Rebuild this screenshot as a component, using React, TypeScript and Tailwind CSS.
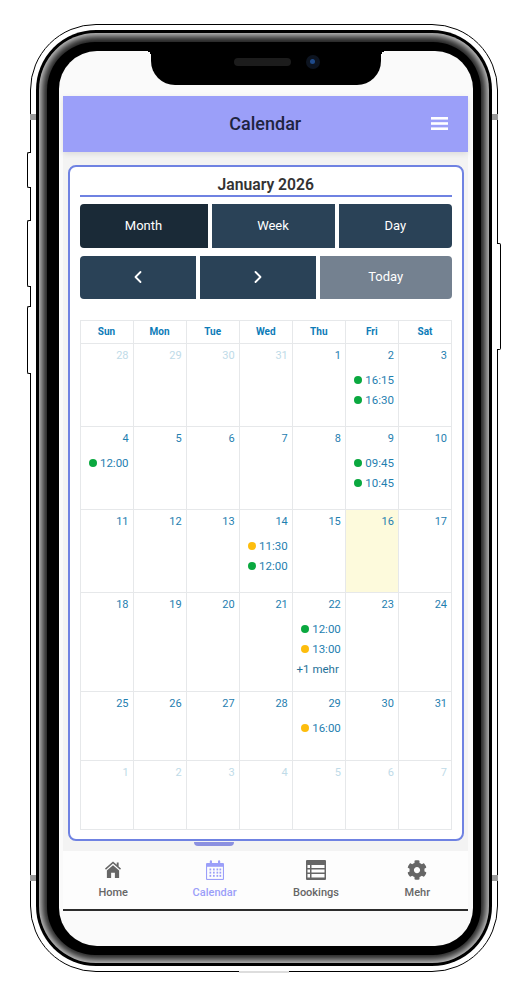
import { ChevronLeft, ChevronRight } from "lucide-react";
import { FaCog } from "react-icons/fa";

type Ev = { time: string; color: "green" | "amber" };
type Day = { n: number; muted?: boolean; today?: boolean; events?: Ev[]; more?: string };

const g = (time: string): Ev => ({ time, color: "green" });
const a = (time: string): Ev => ({ time, color: "amber" });

const weeks: { height: string; days: Day[] }[] = [
  {
    height: "h-[83px]",
    days: [
      { n: 28, muted: true },
      { n: 29, muted: true },
      { n: 30, muted: true },
      { n: 31, muted: true },
      { n: 1 },
      { n: 2, events: [g("16:15"), g("16:30")] },
      { n: 3 },
    ],
  },
  {
    height: "h-[83px]",
    days: [
      { n: 4, events: [g("12:00")] },
      { n: 5 },
      { n: 6 },
      { n: 7 },
      { n: 8 },
      { n: 9, events: [g("09:45"), g("10:45")] },
      { n: 10 },
    ],
  },
  {
    height: "h-[83px]",
    days: [
      { n: 11 },
      { n: 12 },
      { n: 13 },
      { n: 14, events: [a("11:30"), g("12:00")] },
      { n: 15 },
      { n: 16, today: true },
      { n: 17 },
    ],
  },
  {
    height: "h-[99px]",
    days: [
      { n: 18 },
      { n: 19 },
      { n: 20 },
      { n: 21 },
      { n: 22, events: [g("12:00"), a("13:00")], more: "+1 mehr" },
      { n: 23 },
      { n: 24 },
    ],
  },
  {
    height: "h-[69px]",
    days: [
      { n: 25 },
      { n: 26 },
      { n: 27 },
      { n: 28 },
      { n: 29, events: [a("16:00")] },
      { n: 30 },
      { n: 31 },
    ],
  },
  {
    height: "h-[69px]",
    days: [
      { n: 1, muted: true },
      { n: 2, muted: true },
      { n: 3, muted: true },
      { n: 4, muted: true },
      { n: 5, muted: true },
      { n: 6, muted: true },
      { n: 7, muted: true },
    ],
  },
];

function HomeIcon() {
  return (
    <svg width="16" height="17" viewBox="0 0 17 18" fill="#666666">
      <path d="M8.500 0.500 12.500 4V1.500H14.500V5.800L17 8 16 9.200 8.500 2.700 1 9.200 0 8Z" />
      <path d="M8.500 4.500 15 10V18H10.500V12.500H6.500V18H2V10Z" />
    </svg>
  );
}

function CalendarIcon() {
  return (
    <svg width="18" height="20" viewBox="0 0 18 20" fill="#9b9ff9">
      <path d="M1 3h2.800V1.300a1.100 1.100 0 0 1 2.200 0V3h6V1.300a1.100 1.100 0 0 1 2.200 0V3H17a1 1 0 0 1 1 1v15a1 1 0 0 1-1 1H1a1 1 0 0 1-1-1V4a1 1 0 0 1 1-1Z" />
      <rect x="1.100" y="6.800" width="15.800" height="12.100" fill="#fdfdfd" />
      {[3.500, 7, 10.500, 13.500].map((x) =>
        [8.500, 11.700, 14.900].map((y) => <rect key={`${x}-${y}`} x={x} y={y} width="1.700" height="1.900" />),
      )}
    </svg>
  );
}

function BookingsIcon() {
  return (
    <svg width="20" height="20" viewBox="0 0 20 20" fill="#666666">
      <path fillRule="evenodd" d="M1 0h18a1 1 0 0 1 1 1v18a1 1 0 0 1-1 1H1a1 1 0 0 1-1-1V1a1 1 0 0 1 1-1Zm.5 5v3h2.500V5Zm4 0v3h13V5Zm-4 4.500v3h2.500v-3Zm4 0v3h13v-3Zm-4 4.500v3.500h2.500V14Zm4 0v3.500h13V14Z" />
    </svg>
  );
}

function MenuIcon() {
  return (
    <svg width="17" height="13" viewBox="0 0 17 13" fill="#ffffff">
      <rect width="17" height="2.600" y="0" />
      <rect width="17" height="2.600" y="5.200" />
      <rect width="17" height="2.600" y="10.400" />
    </svg>
  );
}

function TabItem({ icon, label, active }: { icon: React.ReactNode; label: string; active?: boolean }) {
  return (
    <div className="flex flex-1 flex-col items-center">
      <div className="flex h-[20px] items-center justify-center">{icon}</div>
      <div className={`mt-[6px] text-[11px] leading-[13px] font-medium ${active ? "text-[#9b9ff9]" : "text-[#666666]"}`}>
        {label}
      </div>
    </div>
  );
}

function Cell({ day }: { day: Day }) {
  return (
    <td className={`border border-[#e6e8ea] p-0 align-top ${day.today ? "bg-[#fdfadc]" : ""}`}>
      <div className={`pt-[5px] pr-[4px] text-right text-[11px] leading-[14px] ${day.muted ? "text-[#c0dbe8]" : "text-[#1f80b0]"}`}>
        {day.n}
      </div>
      {day.events && (
        <div className="mt-[10px] flex flex-col gap-[6px] pr-[4px]">
          {day.events.map((ev) => (
            <div key={ev.time} className="flex h-[14px] items-center justify-end gap-[3px] text-[11.500px] leading-[14px] text-[#1f80b0]">
              <span className={`h-[8px] w-[8px] rounded-full ${ev.color === "green" ? "bg-[#0aa83f]" : "bg-[#fdbd0d]"}`} />
              <span>{ev.time}</span>
            </div>
          ))}
        </div>
      )}
      {day.more && <div className="mt-[6px] pr-[6px] text-right text-[11.500px] leading-[14px] text-[#1f7299]">{day.more}</div>}
    </td>
  );
}

export default function App() {
  return (
    <div className="h-[1000px] w-[530px] bg-white pt-[24px] pl-[29.500px] font-['Roboto',sans-serif]">
      {/* phone body */}
      <div className="relative h-[948px] w-[468.500px] rounded-[66px] border-[1.500px] border-black bg-white p-[5px]">
        <div className="absolute top-[126.500px] left-[-4px] h-[36px] w-[4px] rounded-l-[2px] border-y-[1.500px] border-l-[1.500px] border-black bg-white" />
        <div className="absolute top-[195px] left-[-4px] h-[67px] w-[4px] rounded-l-[2px] border-y-[1.500px] border-l-[1.500px] border-black bg-white" />
        <div className="absolute top-[281px] left-[-4px] h-[68px] w-[4px] rounded-l-[2px] border-y-[1.500px] border-l-[1.500px] border-black bg-white" />
        <div className="absolute top-[218px] right-[-4px] h-[107px] w-[4px] rounded-r-[2px] border-y-[1.500px] border-r-[1.500px] border-black bg-white" />
        <div className="absolute top-[89px] left-[-1px] h-[6px] w-[6px] bg-[#9a9a9a]" />
        <div className="absolute top-[89px] right-[-1px] h-[6px] w-[6px] bg-[#9a9a9a]" />
        <div className="absolute top-[850px] left-[-1px] h-[6px] w-[6px] bg-[#9a9a9a]" />
        <div className="absolute top-[850px] right-[-1px] h-[6px] w-[6px] bg-[#9a9a9a]" />
        <div className="absolute bottom-[-1.500px] left-[208px] h-[1.500px] w-[50px] bg-[#dddddd]" />

        <div className="h-full w-full rounded-[60px] bg-black p-[3px]">
          <div className="h-full w-full rounded-[57px] bg-[#222222] p-[8.500px] shadow-[inset_0_0_7px_3px_#cfcfcf]">
            <div className="h-full w-full rounded-[48px] bg-black pt-[9px] pr-[8px] pb-[8.500px] pl-[12px]">
              {/* screen */}
              <div className="relative flex h-full w-full flex-col overflow-hidden rounded-[38px] bg-[#fafafa]">
                {/* notch */}
                <div className="absolute top-0 left-[91.500px] flex h-[34px] w-[230px] items-start rounded-b-[24px] bg-black pt-[4px] pl-[83px]">
                  <div className="mt-[3px] h-[8px] w-[57px] rounded-full bg-[#1c1c1c]" />
                  <div className="ml-[15px] flex h-[14px] w-[14px] items-center justify-center rounded-full bg-[#0d1420]">
                    <div className="h-[5px] w-[5px] rounded-full bg-[#1f4a8a]" />
                  </div>
                </div>
                <div className="absolute top-0 left-[86.500px] h-[5px] w-[5px] bg-[radial-gradient(circle_at_0_100%,transparent_5px,black_5px)]" />
                <div className="absolute top-0 left-[321.500px] h-[5px] w-[5px] bg-[radial-gradient(circle_at_100%_100%,transparent_5px,black_5px)]" />

                <div className="h-[45px] shrink-0" />

                <div className="mr-[4.500px] ml-[3.500px] flex flex-1 flex-col">
                  {/* header */}
                  <div className="relative z-10 flex h-[56px] shrink-0 items-center justify-center bg-[#9b9ff9] shadow-[0_2px_6px_rgba(0,0,0,0.1)]">
                    <span className="text-[18px] font-medium text-[#1e2440]">Calendar</span>
                    <div className="absolute right-[20px] flex">
                      <MenuIcon />
                    </div>
                  </div>

                  {/* page */}
                  <div className="relative h-[699px] shrink-0 bg-[#f3f3f3] pt-[13px] pr-[4px] pl-[5.500px]">
                    <div className="h-[676px] rounded-[8px] border-2 border-[#6f82e2] bg-white pt-[9px] pr-[10px] pl-[9.500px]">
                      <div className="border-b-[2.500px] border-[#6f82e2] pb-[1px] text-center text-[15.700px] leading-[18px] font-semibold text-[#333333]">
                        January 2026
                      </div>

                      <div className="mt-[7px] flex gap-[4px]">
                        <button type="button" className="h-[44px] w-[128px] rounded-l-[4px] bg-[#1a2a37] text-[13px] text-white">
                          Month
                        </button>
                        <button type="button" className="h-[44px] w-[123px] bg-[#2a4257] text-[13px] text-white">
                          Week
                        </button>
                        <button type="button" className="h-[44px] flex-1 rounded-r-[4px] bg-[#2a4257] text-[13px] text-white">
                          Day
                        </button>
                      </div>

                      <div className="mt-[8px] flex gap-[4px]">
                        <button type="button" className="flex h-[43px] w-[116px] items-center justify-center rounded-l-[4px] bg-[#2a4257] text-white">
                          <ChevronLeft size={20} strokeWidth={2.200} />
                        </button>
                        <button type="button" className="flex h-[43px] w-[116px] items-center justify-center bg-[#2a4257] text-white">
                          <ChevronRight size={20} strokeWidth={2.200} />
                        </button>
                        <button type="button" className="h-[43px] flex-1 rounded-r-[4px] bg-[#748190] text-[13px] text-white">
                          Today
                        </button>
                      </div>

                      <table className="mt-[21px] w-full table-fixed border-collapse">
                        <thead>
                          <tr className="h-[23px]">
                            {["Sun", "Mon", "Tue", "Wed", "Thu", "Fri", "Sat"].map((d) => (
                              <th key={d} className="border border-[#e6e8ea] p-0 text-center text-[10px] font-bold text-[#0d7cb8]">
                                {d}
                              </th>
                            ))}
                          </tr>
                        </thead>
                        <tbody>
                          {weeks.map((w, i) => (
                            <tr key={i} className={w.height}>
                              {w.days.map((day, j) => (
                                <Cell key={j} day={day} />
                              ))}
                            </tr>
                          ))}
                        </tbody>
                      </table>
                    </div>
                    <div className="absolute top-[690px] left-[131px] h-[4px] w-[40px] rounded-b-[4px] bg-[#8b90e0]" />
                  </div>

                  {/* tab bar */}
                  <div className="flex h-[60px] shrink-0 items-start border-b-2 border-[#2c2c2c] bg-[#fdfdfd] pt-[9px]">
                    <TabItem icon={<HomeIcon />} label="Home" />
                    <TabItem icon={<CalendarIcon />} label="Calendar" active />
                    <TabItem icon={<BookingsIcon />} label="Bookings" />
                    <TabItem icon={<FaCog className="text-[20px] text-[#666666]" />} label="Mehr" />
                  </div>
                </div>
              </div>
            </div>
          </div>
        </div>
      </div>
    </div>
  );
}
